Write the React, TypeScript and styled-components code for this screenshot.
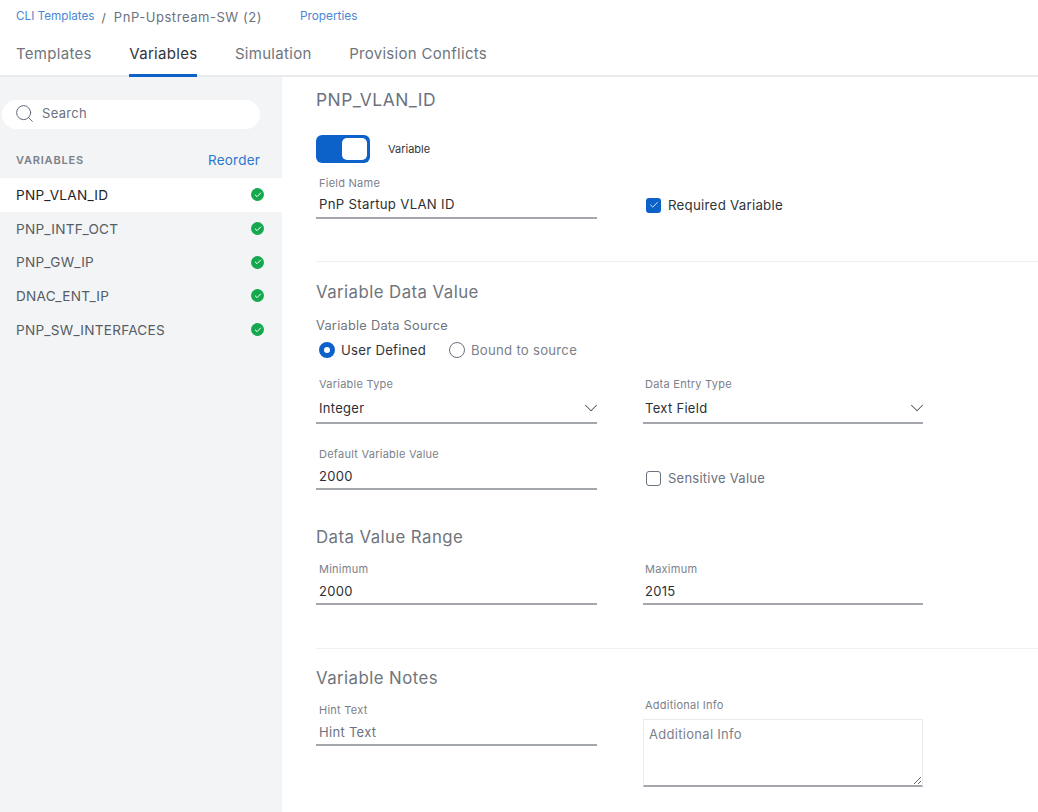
import { createGlobalStyle } from "styled-components";
import styled from "styled-components";
import { Check, ChevronDown, Search } from "lucide-react";

const variables = [
  "PNP_VLAN_ID",
  "PNP_INTF_OCT",
  "PNP_GW_IP",
  "DNAC_ENT_IP",
  "PNP_SW_INTERFACES",
];

const GlobalStyle = createGlobalStyle`
  html, body {
    margin: 0;
    padding: 0;
    background: #fff;
    overflow: hidden;
  }
  * {
    box-sizing: border-box;
  }
  body {
    font-family: Inter, "Liberation Sans", sans-serif;
  }
`;

export default function App() {
  return (
    <Page>
      <GlobalStyle />
      <Header>
        <Breadcrumbs>
          <CrumbLink>CLI Templates</CrumbLink>
          <Slash>/</Slash>
          <CrumbCurrent>PnP-Upstream-SW (2)</CrumbCurrent>
          <PropertiesLink>Properties</PropertiesLink>
        </Breadcrumbs>
        <Tabs>
          <Tab>Templates</Tab>
          <Tab $active>Variables</Tab>
          <Tab>Simulation</Tab>
          <Tab>Provision Conflicts</Tab>
        </Tabs>
      </Header>
      <Body>
        <Sidebar>
          <SearchBox>
            <Search size={21} strokeWidth={1.1} color="#5b6470" />
            <span>Search</span>
          </SearchBox>
          <ListHeader>
            <ListTitle>VARIABLES</ListTitle>
            <Reorder>Reorder</Reorder>
          </ListHeader>
          {variables.map((name, i) => (
            <VarRow key={name} $active={i === 0}>
              {name}
              <StatusDot>
                <Check size={8} strokeWidth={3} color="#fff" />
              </StatusDot>
            </VarRow>
          ))}
        </Sidebar>
        <Main>
          <VarTitle>PNP_VLAN_ID</VarTitle>
          <ToggleRow>
            <Toggle>
              <Knob />
            </Toggle>
            <ToggleLabel>Variable</ToggleLabel>
          </ToggleRow>
          <FormRow $top={13}>
            <Field>
              <FieldLabel>Field Name</FieldLabel>
              <NameValue>PnP Startup VLAN ID</NameValue>
            </Field>
            <CheckRow $top={21}>
              <CheckBox $checked>
                <Check size={10} strokeWidth={2} color="#fff" />
              </CheckBox>
              <CheckText $dark>Required Variable</CheckText>
            </CheckRow>
          </FormRow>
          <Divider $top={42} />

          <SectionTitle $top={19}>Variable Data Value</SectionTitle>
          <SourceLabel>Variable Data Source</SourceLabel>
          <RadioRow>
            <RadioItem>
              <RadioOn />
              <RadioText $dark>User Defined</RadioText>
            </RadioItem>
            <RadioItem>
              <RadioOff />
              <RadioText>Bound to source</RadioText>
            </RadioItem>
          </RadioRow>
          <FormRow $top={18}>
            <Field>
              <FieldLabel>Variable Type</FieldLabel>
              <SelectValue>
                Integer
                <ChevronDown size={22} strokeWidth={1.1} color="#4b5563" />
              </SelectValue>
            </Field>
            <Field>
              <FieldLabel>Data Entry Type</FieldLabel>
              <SelectValue>
                Text Field
                <ChevronDown size={22} strokeWidth={1.1} color="#4b5563" />
              </SelectValue>
            </Field>
          </FormRow>
          <FormRow $top={23}>
            <Field>
              <FieldLabel>Default Variable Value</FieldLabel>
              <FieldValue>2000</FieldValue>
            </Field>
            <CheckRow $top={23}>
              <CheckBox />
              <CheckText>Sensitive Value</CheckText>
            </CheckRow>
          </FormRow>

          <SectionTitle $top={36}>Data Value Range</SectionTitle>
          <FormRow $top={14}>
            <Field>
              <FieldLabel>Minimum</FieldLabel>
              <FieldValue>2000</FieldValue>
            </Field>
            <Field>
              <FieldLabel>Maximum</FieldLabel>
              <FieldValue>2015</FieldValue>
            </Field>
          </FormRow>
          <Divider $top={43} />

          <SectionTitle $top={18}>Variable Notes</SectionTitle>
          <FormRow $top={-2}>
            <Field $top={16}>
              <FieldLabel>Hint Text</FieldLabel>
              <FieldValue $muted>Hint Text</FieldValue>
            </Field>
            <Field $top={11}>
              <FieldLabel>Additional Info</FieldLabel>
              <Notes placeholder="Additional Info" readOnly />
            </Field>
          </FormRow>
        </Main>
      </Body>
    </Page>
  );
}

const Page = styled.div`
  width: 1038px;
  height: 812px;
  display: flex;
  flex-direction: column;
  background: #fff;
  overflow: hidden;
`;

const Header = styled.header`
  height: 77px;
  flex: none;
  padding-left: 16px;
  border-bottom: 2px solid #e8eaed;
`;

const Breadcrumbs = styled.div`
  display: flex;
  align-items: center;
  height: 34px;
`;

const CrumbLink = styled.a`
  font-size: 11.7px;
  color: #4a86d6;
  margin-top: -3px;
`;

const Slash = styled.span`
  font-size: 12px;
  color: #5b6470;
  margin: 0 8px 0 7px;
`;

const CrumbCurrent = styled.span`
  font-size: 13px;
  color: #6b7280;
  letter-spacing: 0.55px;
`;

const PropertiesLink = styled.a`
  font-size: 11.8px;
  color: #4a86d6;
  margin-left: 38px;
  margin-top: -3px;
`;

const Tabs = styled.nav`
  display: flex;
  gap: 37.5px;
  height: 43px;
`;

const Tab = styled.div<{ $active?: boolean }>`
  height: 43px;
  padding-top: 10px;
  font-size: 15px;
  letter-spacing: 0.3px;
  color: ${({ $active }) => ($active ? "#30343a" : "#6f757d")};
  border-bottom: 3px solid ${({ $active }) => ($active ? "#0d62c9" : "transparent")};
`;

const Body = styled.div`
  flex: 1;
  display: flex;
  min-height: 0;
`;

const Sidebar = styled.aside`
  width: 282px;
  flex: none;
  background: #f3f4f6;
  padding-top: 23px;
`;

const SearchBox = styled.div`
  width: 258px;
  height: 29px;
  margin-left: 2px;
  padding: 0 0 3px 12px;
  display: flex;
  align-items: center;
  gap: 7px;
  border-radius: 15px;
  background: #fff;
  font-size: 13px;
  letter-spacing: 0.3px;
  color: #6b7280;
`;

const ListHeader = styled.div`
  width: 260px;
  height: 49px;
  padding: 13px 0 0 16px;
  display: flex;
  align-items: center;
  justify-content: space-between;
`;

const ListTitle = styled.span`
  font-size: 11px;
  font-weight: 600;
  letter-spacing: 0.8px;
  color: #7b818a;
`;

const Reorder = styled.a`
  font-size: 13.5px;
  letter-spacing: 0.2px;
  color: #2f76cf;
`;

const VarRow = styled.div<{ $active?: boolean }>`
  height: 33.7px;
  padding: 0 18px 0 16px;
  display: flex;
  align-items: center;
  justify-content: space-between;
  font-size: 13.6px;
  letter-spacing: 0.25px;
  color: ${({ $active }) => ($active ? "#1f2329" : "#565c64")};
  background: ${({ $active }) => ($active ? "#fff" : "transparent")};
`;

const StatusDot = styled.span`
  width: 13px;
  height: 13px;
  border-radius: 50%;
  background: #14a94f;
  display: flex;
  align-items: center;
  justify-content: center;
`;

const Main = styled.main`
  flex: 1;
  padding: 13px 0 0 34px;
  min-width: 0;
`;

const VarTitle = styled.h1`
  margin: 0;
  font-size: 17.4px;
  line-height: 20px;
  font-weight: 400;
  letter-spacing: 0.5px;
  color: #6b7280;
`;

const ToggleRow = styled.div`
  display: flex;
  align-items: center;
  gap: 18px;
  margin-top: 25px;
`;

const Toggle = styled.div`
  width: 54px;
  height: 28px;
  padding: 3px;
  border-radius: 6px;
  background: #0d62c9;
  display: flex;
  justify-content: flex-end;
`;

const Knob = styled.div`
  width: 25px;
  height: 22px;
  border-radius: 5px;
  background: #fff;
`;

const ToggleLabel = styled.span`
  font-size: 11px;
  color: #30343a;
`;

const FormRow = styled.div<{ $top?: number }>`
  display: grid;
  grid-template-columns: 281px 280px;
  column-gap: 46px;
  align-items: start;
  margin-top: ${({ $top }) => $top ?? 0}px;

  > :nth-child(2) label {
    padding-left: 2px;
  }
`;

const Field = styled.div<{ $top?: number }>`
  margin-top: ${({ $top }) => $top ?? 0}px;
`;

const FieldLabel = styled.label`
  display: block;
  height: 14px;
  padding-left: 3px;
  font-size: 11px;
  line-height: 14px;
  letter-spacing: 0.25px;
  color: #7b818a;
`;

const FieldValue = styled.div<{ $muted?: boolean }>`
  height: 29px;
  padding: 3px 0 0 3px;
  display: flex;
  align-items: center;
  justify-content: space-between;
  font-size: 13px;
  letter-spacing: 0.3px;
  color: ${({ $muted }) => ($muted ? "#6b7280" : "#2b2f35")};
  border-bottom: 2px solid #a4a8ad;

  ${FormRow} > :nth-child(2) & {
    padding-left: 2px;
  }
`;

const NameValue = styled(FieldValue)`
  padding-top: 0;
  font-size: 13.2px;
`;

const SelectValue = styled(FieldValue)`
  height: 33px;

  svg {
    margin-right: -5px;
  }
`;

const Notes = styled.textarea`
  display: block;
  width: 280px;
  height: 68px;
  margin-top: 7px;
  padding: 6px 5px;
  font-family: inherit;
  font-size: 13px;
  letter-spacing: 0.3px;
  color: #6b7280;
  border: 1px solid #e9ebee;
  border-bottom: 2px solid #a4a8ad;
  border-radius: 0;
  outline: none;

  &::placeholder {
    color: #7b818a;
    opacity: 1;
  }
`;

const CheckRow = styled.div<{ $top: number }>`
  display: flex;
  align-items: center;
  gap: 7px;
  padding-left: 3px;
  margin-top: ${({ $top }) => $top}px;
`;

const CheckBox = styled.span<{ $checked?: boolean }>`
  width: 15px;
  height: 15px;
  border-radius: 3px;
  display: flex;
  align-items: center;
  justify-content: center;
  background: ${({ $checked }) => ($checked ? "#0d62c9" : "#fff")};
  border: ${({ $checked }) => ($checked ? "none" : "1.5px solid #6b7280")};
`;

const CheckText = styled.span<{ $dark?: boolean }>`
  font-size: ${({ $dark }) => ($dark ? 13.3 : 13)}px;
  letter-spacing: 0.25px;
  color: ${({ $dark }) => ($dark ? "#30343a" : "#6b7280")};
`;

const Divider = styled.hr<{ $top: number }>`
  border: none;
  height: 1px;
  margin: ${({ $top }) => $top}px 0 0;
  background: #eef0f2;
`;

const SectionTitle = styled.h2<{ $top: number }>`
  margin: ${({ $top }) => $top}px 0 0;
  font-size: 16.8px;
  line-height: 22px;
  font-weight: 400;
  letter-spacing: 0.45px;
  color: #6f757d;
`;

const SourceLabel = styled.div`
  margin-top: 15px;
  font-size: 12.8px;
  line-height: 16px;
  letter-spacing: 0.25px;
  color: #6f757d;
`;

const RadioRow = styled.div`
  display: flex;
  gap: 23px;
  padding-left: 3px;
  margin-top: 7px;
`;

const RadioItem = styled.div`
  display: flex;
  align-items: center;
  gap: 6px;
`;

const RadioOn = styled.span`
  width: 16px;
  height: 16px;
  border-radius: 50%;
  border: 5px solid #0d62c9;
  background: #fff;
`;

const RadioOff = styled.span`
  width: 16px;
  height: 16px;
  border-radius: 50%;
  border: 1.2px solid #6b7280;
  background: #fff;
`;

const RadioText = styled.span<{ $dark?: boolean }>`
  font-size: 13.2px;
  line-height: 18px;
  letter-spacing: 0.25px;
  color: ${({ $dark }) => ($dark ? "#30343a" : "#7b818a")};
`;
